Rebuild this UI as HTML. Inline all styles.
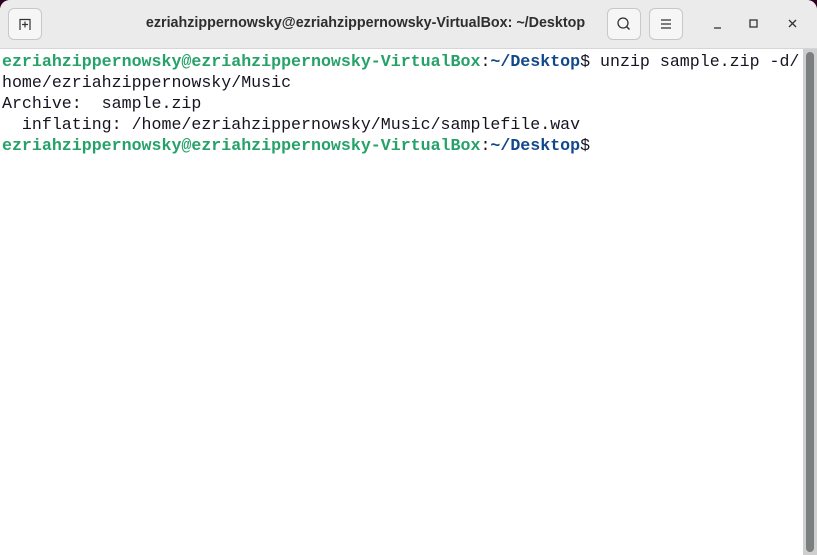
<!DOCTYPE html>
<html><head><style>
body{margin:0;width:817px;height:555px;overflow:hidden;background:#2c001e;position:relative;font-family:"Liberation Sans",sans-serif}
.win{position:absolute;left:0;top:0;width:817px;height:555px;background:#fff;border-radius:10px 10px 0 0;overflow:hidden}
.hdr{position:absolute;left:0;top:0;width:817px;height:48px;background:#ebebeb;border-bottom:1px solid #d6d6d6}
.btn{position:absolute;top:8px;width:34px;height:32px;border:1px solid #c8c8c8;border-radius:6px;background:#f6f6f6;box-sizing:border-box}
.title{position:absolute;left:143px;width:445px;top:15px;text-align:center;font-weight:bold;font-size:14.3px;color:#2e2e2e;white-space:nowrap}
.term{position:absolute;left:2px;top:51px;font-family:"Liberation Mono",monospace;font-size:16.63px;line-height:21px;color:#171421;white-space:pre}
.g{color:#26a269;font-weight:bold}.b{color:#12488b;font-weight:bold}
.track{position:absolute;left:803px;top:49px;width:14px;height:506px;background:#cfcfcf}
.thumb{position:absolute;left:806px;top:52px;width:8px;height:500px;background:#7c7f80;border-radius:4px}
</style></head><body>
<div class="win">
<div class="hdr">
<div class="btn" style="left:8px"><svg width="32" height="30" viewBox="0 0 32 30"><path d="M11 21V10.5h10V21M16 12.5v6M13 15.5h6" fill="none" stroke="#333" stroke-width="1.2"/></svg></div>
<div class="title">ezriahzippernowsky@ezriahzippernowsky-VirtualBox: ~/Desktop</div>
<div class="btn" style="left:607px"><svg width="32" height="30" viewBox="0 0 32 30"><circle cx="15" cy="14" r="5" fill="none" stroke="#333" stroke-width="1.3"/><path d="M18.5 17.5l3 3" stroke="#333" stroke-width="1.5"/></svg></div>
<div class="btn" style="left:649px"><svg width="32" height="30" viewBox="0 0 32 30"><path d="M11 11h10M11 15h10M11 19h10" stroke="#333" stroke-width="1.2"/></svg></div>
<svg style="position:absolute;left:700px;top:14px" width="117" height="20" viewBox="0 0 117 20"><path d="M14 14h7" stroke="#333" stroke-width="1.3"/><rect x="50" y="6" width="7" height="7" fill="none" stroke="#333" stroke-width="1.3"/><path d="M89 6l7 7M96 6l-7 7" stroke="#333" stroke-width="1.3"/></svg>
</div>
<div class="term"><span class="g">ezriahzippernowsky@ezriahzippernowsky-VirtualBox</span>:<span class="b">~/Desktop</span>$ unzip sample.zip -d/
home/ezriahzippernowsky/Music
Archive:  sample.zip
  inflating: /home/ezriahzippernowsky/Music/samplefile.wav
<span class="g">ezriahzippernowsky@ezriahzippernowsky-VirtualBox</span>:<span class="b">~/Desktop</span>$</div>
<div class="track"></div><div class="thumb"></div>
</div>
</body></html>
